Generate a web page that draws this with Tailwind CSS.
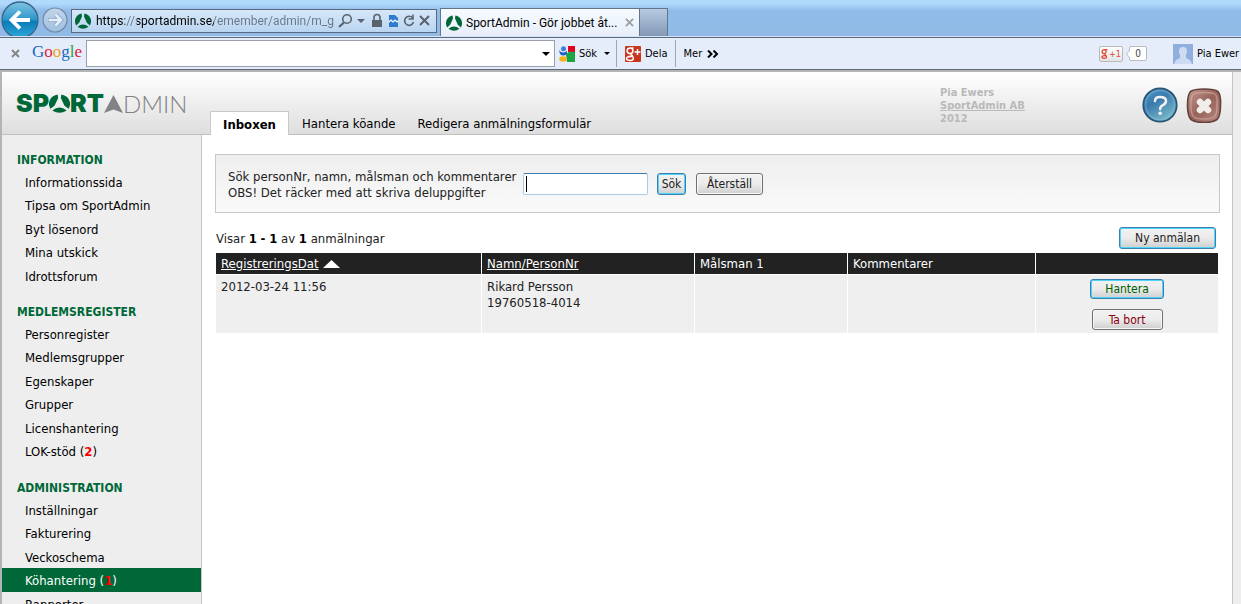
<!DOCTYPE html>
<html lang="sv">
<head>
<meta charset="utf-8">
<meta name="viewport" content="width=device-width, initial-scale=1">
<title>SportAdmin - Gör jobbet åt dig</title>
<script src="https://cdn.jsdelivr.net/npm/@tailwindcss/browser@4"></script>
</head>
<body class="h-screen overflow-hidden flex flex-col bg-white font-['DejaVu_Sans_Condensed','DejaVu_Sans',sans-serif] text-[13px] leading-4 text-[#222]">

<svg class="absolute w-0 h-0" aria-hidden="true">
  <defs>
    <symbol id="mark" viewBox="0 0 16 16">
      <path d="M6.6.4A8 8 0 0 0 1.1 12.400L4.200 9.800 7 3.400z M9.400.4A8 8 0 0 1 14.900 12.400L11.800 9.800 9 3.400z M2.500 13.800Q8 9 13.500 13.800Q8 17.800 2.500 13.800z"/>
    </symbol>
    <linearGradient id="blueball" x1="0" y1="0" x2="0" y2="1"><stop offset="0" stop-color="#7fc4e2"/><stop offset=".48" stop-color="#2f97ca"/><stop offset=".54" stop-color="#0a7cb8"/><stop offset="1" stop-color="#2fa9da"/></linearGradient>
    <linearGradient id="paleball" x1="0" y1="0" x2="0" y2="1"><stop offset="0" stop-color="#c3d6ea"/><stop offset="1" stop-color="#9dbfe2"/></linearGradient>
    <linearGradient id="help" x1="0" y1="0" x2=".6" y2="1"><stop offset="0" stop-color="#4a9ac4"/><stop offset=".45" stop-color="#3b7aae"/><stop offset="1" stop-color="#77b8c8"/></linearGradient>
    <linearGradient id="close" x1="0" y1="0" x2="1" y2="1"><stop offset="0" stop-color="#c79c92"/><stop offset=".5" stop-color="#96625a"/><stop offset="1" stop-color="#b98b80"/></linearGradient>
  </defs>
</svg>

<header class="shrink-0 text-black">
  <div class="h-[37px] flex items-end overflow-hidden bg-linear-to-b from-[#b0dafc] from-10% via-[#90bbe9] via-30% to-[#91bae6] border-b border-[#d4e4f6] font-['Roboto','Open_Sans',sans-serif] text-[12px]">
    <button class="shrink-0 w-10 h-9" aria-label="Bakåt">
      <svg viewBox="0 0 40 36" class="block w-10 h-9"><circle cx="20" cy="20" r="18" fill="url(#blueball)" stroke="#3c6485" stroke-width="1.300"/><path d="M30 20H12M20 11.500L11.500 20L20 28.500" fill="none" stroke="#fff" stroke-width="3.800"/></svg>
    </button>
    <button class="shrink-0 w-7 h-7 ml-px mb-px" aria-label="Framåt">
      <svg viewBox="0 0 28 28" class="block w-7 h-7"><circle cx="14" cy="13" r="12" fill="url(#paleball)" stroke="#7187a1" stroke-width="1.200"/><path d="M7 13H20M14.500 7.500L20 13L14.500 18.500" fill="none" stroke="#8aa2bd" stroke-width="4.200"/><path d="M7.500 13H20M14.500 7.500L20 13L14.500 18.500" fill="none" stroke="#e3effa" stroke-width="2.600"/></svg>
    </button>
    <div class="shrink-0 w-[366px] h-6 ml-[2px] mb-[3px] px-[3px] flex items-center border border-[#596a7e] bg-linear-to-b from-[#d6e7f8] to-[#bad5f1]">
      <svg class="w-4 h-4 shrink-0 fill-[#006838]"><use href="#mark"/></svg>
      <input aria-label="Adress" value="https://sportadmin.se/emember/admin/m_g" class="ml-[5px] w-[242px] shrink-0 bg-transparent text-transparent bg-clip-text bg-[linear-gradient(90deg,#000_29px,#66778a_29px,#66778a_41px,#000_41px,#000_118px,#66778a_118px)]">
      <svg viewBox="0 0 96 16" class="w-24 h-4 shrink-0" fill="none" stroke="#59636f" stroke-width="1.600"><circle cx="9" cy="6" r="4.300"/><path d="M6 9.500L1 14" stroke-width="2.200"/><path d="M19 6h8l-4 4z" fill="#59636f" stroke="none"/><path d="M34 7h10v7H34z" fill="#59636f" stroke="none"/><path d="M36 8V4.500a3 3 0 0 1 6 0V8"/><path d="M51 2h6l3 3v9H51z" fill="#2f7ccf" stroke="none"/><path d="M51 9l2-2 2 2 2-2 2 2 1-1" stroke="#fff" stroke-width="1.200"/><path d="M74.500 4.800A4.500 4.500 0 1 0 75.500 9"/><path d="M75 1.500v4.500h-4.500"/><path d="M82 3l9 9M91 3l-9 9" stroke-width="2"/></svg>
    </div>
    <div class="shrink-0 w-[200px] h-7 ml-[3px] pl-[5px] pr-[5px] flex items-center border border-b-0 border-[#61758d] bg-linear-to-b from-[#f7fbff] to-[#e7eefa]">
      <svg class="w-4 h-4 shrink-0 fill-[#006838]"><use href="#mark"/></svg>
      <span class="ml-1 grow whitespace-nowrap">SportAdmin - Gör jobbet åt...</span>
      <button aria-label="Stäng flik"><svg viewBox="0 0 10 10" class="w-[9px] h-[9px]"><path d="M1 1l8 8M9 1L1 9" stroke="#9a9fa6" stroke-width="2"/></svg></button>
    </div>
    <button aria-label="Ny flik" class="shrink-0 w-7 h-7 border border-l-0 border-b-0 border-[#61758d] bg-linear-to-b from-[#b7cbe2] to-[#8399b5]"></button>
  </div>

  <div class="h-[33px] flex items-center overflow-hidden whitespace-nowrap bg-[#e6edfa] border-y border-[#5b6a7d] text-[11px]">
    <button aria-label="Stäng verktygsfält" class="shrink-0 ml-[11px] w-[10px]"><svg viewBox="0 0 9 9" class="w-[9px] h-[9px]"><path d="M1 1l7 7M8 1L1 8" stroke="#858585" stroke-width="2"/></svg></button>
    <span class="shrink-0 ml-[11px] w-[54px] font-['Liberation_Serif',serif] text-[17px] leading-6 pb-1"><span class="text-[#1769c4]">G</span><span class="text-[#e0203c]">o</span><span class="text-[#f0a21c]">o</span><span class="text-[#1769c4]">g</span><span class="text-[#2ba23c]">l</span><span class="text-[#e0203c]">e</span></span>
    <div class="shrink-0 w-[469px] h-[27px] pr-1 flex items-center bg-white border border-[#9a9fab]">
      <input aria-label="Google-sökning" class="grow h-full px-1 outline-none">
      <button aria-label="Visa tidigare sökningar"><svg viewBox="0 0 8 4" class="w-2 h-1"><path d="M0 0h8L4 4z"/></svg></button>
    </div>
    <button class="shrink-0 ml-1 flex items-center">
      <svg viewBox="0 0 16 16" class="w-4 h-4"><path d="M9 0h7v6H9z" fill="#e2001a"/><path d="M7 9q2-5 9-3v10H8z" fill="#1ea446"/><circle cx="4.500" cy="2.800" r="2.500" fill="#3f7de0"/><path d="M0 4q3 4.500 8 1v3q-4 3-7 0z" fill="#1f5fc8"/><ellipse cx="4" cy="13" rx="3.800" ry="2.800" fill="#f6b21b"/></svg>
      <span class="ml-1 w-[25px] text-left">Sök</span>
      <svg viewBox="0 0 6 3" class="w-[6px] h-[3px]"><path d="M0 0h6L3 3z"/></svg>
    </button>
    <span class="shrink-0 ml-[6px] w-px h-[27px] bg-[#a3a6ad]"></span>
    <button class="shrink-0 ml-2 flex items-center">
      <svg viewBox="0 0 16 16" class="w-4 h-4"><rect width="16" height="16" rx="1" fill="#c9361f"/><path d="M8.500 2H5.500C1 2 1 7.500 5 7.500C9 7.500 8.500 2.500 6 2.200M5.500 7.500L7.500 10Q10 14.500 5 14.500Q0 14 2 11.500Q4 10 7 10.500" fill="none" stroke="#fff" stroke-width="1.500"/><path d="M12.500 3v6M9.500 6h6" stroke="#fff" stroke-width="1.500"/></svg>
      <span class="ml-1">Dela</span>
    </button>
    <span class="shrink-0 ml-[7px] w-px h-[27px] bg-[#a3a6ad]"></span>
    <button class="shrink-0 ml-2 flex items-center gap-[5px]">Mer
      <svg viewBox="0 0 12 8" class="w-3 h-2" fill="none" stroke="#000" stroke-width="2"><path d="M1 .5L4.500 4L1 7.500M6.500 .5L10 4L6.500 7.500"/></svg>
    </button>
    <button class="shrink-0 ml-auto w-6 h-4 flex items-center justify-center gap-px border border-[#b9b9b9] rounded-xs bg-linear-to-b from-white to-[#e4e4e4] text-[9px] leading-3 text-[#dd4b39]">
      <svg viewBox="0 0 8 13" class="w-[7px] h-3" fill="none" stroke="#dd4b39" stroke-width="1.500"><path d="M7.500 1.500H4C.5 1.500.5 6 3.500 6S6.500 2 4 1.500M4 6l1.500 2Q7.500 11.500 4 11.500Q0 11.500 1.500 9Q3 8 5.500 8.500"/></svg>+1
    </button>
    <span class="shrink-0 ml-[3px] flex items-center">
      <svg viewBox="0 0 4 8" class="w-1 h-2 -mr-px z-10"><path d="M4 0L.5 4L4 8" fill="#fff" stroke="#bbb"/></svg>
      <span class="w-[18px] h-[15px] text-center text-[10px] leading-[13px] text-[#444] bg-white border border-[#bbb] rounded-xs">0</span>
    </span>
    <svg viewBox="0 0 20 20" class="shrink-0 ml-[26px] w-5 h-5"><path d="M0 0h20v20H0z" fill="#90aede"/><path d="M10 3c5 0 4.500 5 3 8v3q5 1.500 6 6H1q1-4.500 6-6v-3C5.500 8 5 3 10 3z" fill="#cddaf2"/></svg>
    <span class="shrink-0 ml-[4px] w-11">Pia Ewer</span>
  </div>
</header>

<div class="grow min-h-0 flex flex-col border-t-2 border-l-2 border-[#b4b4b4] bg-[#eee]">
  <div class="grow min-h-0 mr-2 flex flex-col border-r border-[#c4c4c4] bg-white">
    <div class="shrink-0 h-[63px] flex bg-linear-to-b from-white to-[#dedede] border-b border-[#c0c0c0]">
      <a href="#" aria-label="SportAdmin" class="shrink-0 w-[208px] h-[63px] pl-[14px] flex items-center text-[25px] leading-none text-[#006838]">
        <span class="font-['Inter',sans-serif] font-black">SP</span>
        <svg class="w-[21px] h-[19px] fill-[#006838]" viewBox="0 0 16 16" preserveAspectRatio="none"><use href="#mark"/></svg>
        <span class="font-['Inter',sans-serif] font-black">RT</span>
        <svg viewBox="0 0 19 18" class="w-[19px] h-[18px]"><path d="M9.500 0L19 18L9.500 14.500L0 18z" fill="#808285"/></svg>
        <span class="font-['Lato',sans-serif] text-[24px] font-light text-[#808285]">DMIN</span>
      </a>
      <nav class="grow flex items-end -mb-px text-black">
        <a href="#" class="w-[79px] h-6 pt-[5px] text-center font-bold bg-white border border-b-0 border-[#c8c8c8]">Inboxen</a>
        <a href="#" class="h-[19px] ml-[13px]">Hantera köande</a>
        <a href="#" class="h-[19px] ml-[22px]">Redigera anmälningsformulär</a>
      </nav>
      <div class="shrink-0 w-[202px] pt-[14px] text-[11px] leading-[13px] font-bold text-[#b9b9b9]">
        <p>Pia Ewers</p>
        <p><a href="#" class="underline">SportAdmin AB</a></p>
        <p>2012</p>
      </div>
      <div class="shrink-0 pt-[15px] pr-[10px] flex items-start gap-2">
        <button aria-label="Hjälp"><svg viewBox="0 0 36 36" class="block w-9 h-9"><circle cx="18" cy="18" r="16.700" fill="url(#help)" stroke="#2a5575" stroke-width="1.800"/><circle cx="18" cy="18" r="14.500" fill="none" stroke="#8cc4de" stroke-opacity=".4" stroke-width="1.500"/><path d="M13 14Q13 10 18 10Q24 10 24 14Q24 17 20.500 18.300Q18.200 19.500 18.200 22" fill="none" stroke="#f4f4f2" stroke-width="2.500" stroke-linecap="round"/><circle cx="18.200" cy="26.300" r="1.800" fill="#f4f4f2"/></svg></button>
        <button aria-label="Stäng"><svg viewBox="0 0 36 36" class="block w-9 h-9"><path d="M18 2Q29 2 32 4.500Q35 8 34.500 18Q34.500 29 31 32.500Q27 35.500 18 35.500Q9 35.500 5 32.500Q1.500 29 1.500 18Q1.500 8 4.500 4.500Q8 2 18 2z" fill="url(#close)" stroke="#62403b" stroke-width="1.600"/><path d="M18 5.500Q27 5.500 29.500 7.500Q31.500 10 31 18Q31 27 28.500 29.500Q26 32 18 32Q10 32 7.500 29.500Q5 27 5 18Q5 10 7 7.500Q10 5.500 18 5.500z" fill="none" stroke="#dcbbb2" stroke-opacity=".5" stroke-width="1.400"/><path d="M14 15L22 23M22 15L14 23" stroke="#f1edeb" stroke-width="6.500" stroke-linecap="round"/></svg></button>
      </div>
    </div>

    <div class="grow min-h-0 flex">
      <aside class="shrink-0 w-[200px] overflow-hidden bg-[#eee] border-r border-[#c8c8c8] text-black">
        <nav class="pt-[13px] flex flex-col gap-[13px]">
          <section>
            <h2 class="h-[22px] pl-[15px] leading-6 text-[12px] font-bold text-[#006838]">INFORMATION</h2>
            <ul>
              <li class="odd:h-[23px] even:h-6 pl-[23px] leading-[25px]"><a href="#">Informationssida</a></li>
              <li class="odd:h-[23px] even:h-6 pl-[23px] leading-[25px]"><a href="#">Tipsa om SportAdmin</a></li>
              <li class="odd:h-[23px] even:h-6 pl-[23px] leading-[25px]"><a href="#">Byt lösenord</a></li>
              <li class="odd:h-[23px] even:h-6 pl-[23px] leading-[25px]"><a href="#">Mina utskick</a></li>
              <li class="odd:h-[23px] even:h-6 pl-[23px] leading-[25px]"><a href="#">Idrottsforum</a></li>
            </ul>
          </section>
          <section>
            <h2 class="h-[22px] pl-[15px] leading-6 text-[12px] font-bold text-[#006838]">MEDLEMSREGISTER</h2>
            <ul>
              <li class="odd:h-[23px] even:h-6 pl-[23px] leading-[25px]"><a href="#">Personregister</a></li>
              <li class="odd:h-[23px] even:h-6 pl-[23px] leading-[25px]"><a href="#">Medlemsgrupper</a></li>
              <li class="odd:h-[23px] even:h-6 pl-[23px] leading-[25px]"><a href="#">Egenskaper</a></li>
              <li class="odd:h-[23px] even:h-6 pl-[23px] leading-[25px]"><a href="#">Grupper</a></li>
              <li class="odd:h-[23px] even:h-6 pl-[23px] leading-[25px]"><a href="#">Licenshantering</a></li>
              <li class="odd:h-[23px] even:h-6 pl-[23px] leading-[25px]"><a href="#">LOK-stöd (<b class="text-[#f00]">2</b>)</a></li>
            </ul>
          </section>
          <section>
            <h2 class="h-[22px] pl-[15px] leading-6 text-[12px] font-bold text-[#006838]">ADMINISTRATION</h2>
            <ul>
              <li class="odd:h-[23px] even:h-6 pl-[23px] leading-[25px]"><a href="#">Inställningar</a></li>
              <li class="odd:h-[23px] even:h-6 pl-[23px] leading-[25px]"><a href="#">Fakturering</a></li>
              <li class="odd:h-[23px] even:h-6 pl-[23px] leading-[25px]"><a href="#">Veckoschema</a></li>
              <li class="odd:h-[23px] even:h-6 pl-[23px] leading-[25px] bg-[#006838] text-white"><a href="#">Köhantering (<b class="text-[#f00]">1</b>)</a></li>
              <li class="odd:h-[23px] even:h-6 pl-[23px] leading-[25px]"><a href="#">Rapporter</a></li>
            </ul>
          </section>
        </nav>
      </aside>

      <main class="grow min-w-0 pt-[19px] pl-[13px] pr-3">
        <form class="h-[59px] pl-3 flex items-center border border-[#c8c8c8] bg-linear-to-b from-[#eee] to-[#fafafa]">
          <label for="q" class="w-[295px] pt-[2px]">Sök personNr, namn, målsman och kommentarer<br>OBS! Det räcker med att skriva deluppgifter</label>
          <input id="q" class="w-[125px] h-[22px] px-[2px] bg-white bg-[linear-gradient(#000,#000)] bg-size-[1px_16px] bg-position-[2px_center] bg-no-repeat border border-[#a9cce3] border-t-[#3d7bad] rounded-xs outline-none">
          <button type="button" class="w-[29px] h-[22px] ml-[9px] mr-[10px] text-[12px] leading-4 border border-[#3c7fb1] rounded-[3px] inset-ring inset-ring-[#4fd3f7] bg-linear-to-b from-[#f2f2f2] via-[#ebebeb] via-50% to-[#cfcfcf]">Sök</button>
          <button type="reset" class="w-[67px] h-[22px] text-[12px] leading-4 border border-[#707070] rounded-[3px] inset-ring inset-ring-[#f7f7f7] bg-linear-to-b from-[#f2f2f2] via-[#ebebeb] via-50% to-[#cfcfcf]">Återställ</button>
        </form>
        <div class="h-10 pl-px pr-1 pt-[14px] flex items-start justify-between">
          <p class="pt-1">Visar <b class="text-black">1</b> <b class="text-black">-</b> <b class="text-black">1</b> av <b class="text-black">1</b> anmälningar</p>
          <button class="w-[97px] h-[22px] text-[12px] leading-4 border border-[#3c7fb1] rounded-[3px] inset-ring inset-ring-[#4fd3f7] bg-linear-to-b from-[#f2f2f2] via-[#ebebeb] via-50% to-[#cfcfcf]">Ny anmälan</button>
        </div>
        <div class="pl-px pr-[2px]">
          <table class="w-full table-fixed border-separate border-spacing-0 text-left">
            <thead class="bg-[#222] text-white">
              <tr>
                <th class="w-[266px] h-[22px] px-[5px] font-normal border-r border-b border-white"><a href="#" class="underline">RegistreringsDat</a><svg viewBox="0 0 17 8" class="inline-block ml-1 w-[17px] h-2 fill-white"><path d="M8.500 0L17 8H0z"/></svg></th>
                <th class="w-[213px] px-[5px] font-normal border-r border-b border-white"><a href="#" class="underline">Namn/PersonNr</a></th>
                <th class="w-[153px] px-[5px] font-normal border-r border-b border-white">Målsman 1</th>
                <th class="w-[188px] px-[5px] font-normal border-r border-b border-white">Kommentarer</th>
                <td class="border-b border-white"></td>
              </tr>
            </thead>
            <tbody class="bg-[#efefef]">
              <tr class="align-top">
                <td class="h-[58px] px-[5px] pt-1 border-r border-white">2012-03-24 11:56</td>
                <td class="px-[5px] pt-1 border-r border-white">Rikard Persson<br>19760518-4014</td>
                <td class="border-r border-white"></td>
                <td class="border-r border-white"></td>
                <td class="pt-1 pb-[3px]">
                  <div class="flex flex-col items-center gap-[10px] text-[12px]">
                    <button class="w-[74px] h-5 leading-4 text-[#006000] border border-[#3c7fb1] rounded-[3px] inset-ring inset-ring-[#4fd3f7] bg-linear-to-b from-[#f2f2f2] via-[#ebebeb] via-50% to-[#cfcfcf]">Hantera</button>
                    <button class="w-[71px] h-[21px] leading-4 text-[#8b0010] border border-[#707070] rounded-[3px] inset-ring inset-ring-[#f7f7f7] bg-linear-to-b from-[#f2f2f2] via-[#ebebeb] via-50% to-[#cfcfcf]">Ta bort</button>
                  </div>
                </td>
              </tr>
            </tbody>
          </table>
        </div>
      </main>
    </div>
  </div>
</div>
</body>
</html>
